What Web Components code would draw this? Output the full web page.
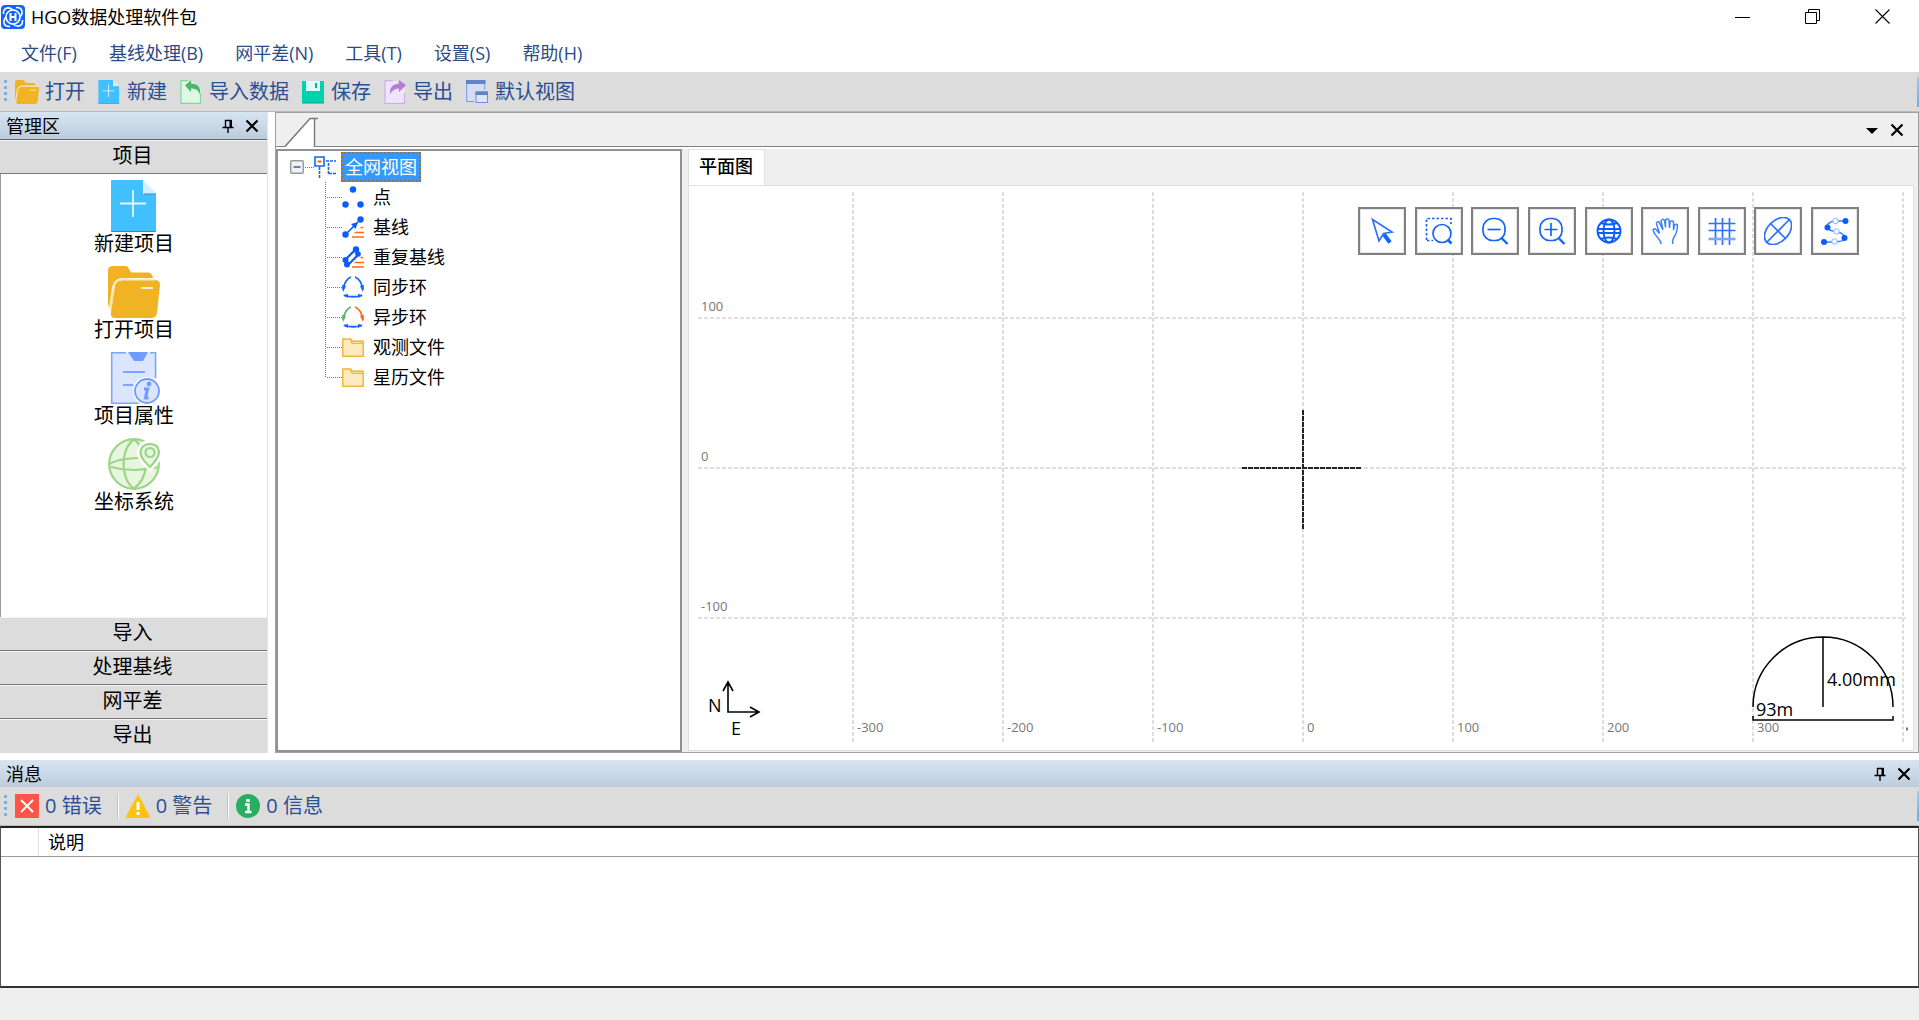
<!DOCTYPE html>
<html lang="zh-CN">
<head>
<meta charset="utf-8">
<title>HGO数据处理软件包</title>
<style>
  html, body {
    height: 100%;
    margin: 0;
  }

  body {
    font-family: "Open Sans", "Noto Sans CJK SC", sans-serif;
    font-size: 18px;
    line-height: 24px;
    color: #000;
    background: #fff;
    cursor: default;
  }
</style>
</head>
<body>

<hgo-window>
  <hgo-titlebar>HGO数据处理软件包</hgo-titlebar>
  <hgo-menubar>
    <hgo-menu>文件(F)</hgo-menu>
    <hgo-menu>基线处理(B)</hgo-menu>
    <hgo-menu>网平差(N)</hgo-menu>
    <hgo-menu>工具(T)</hgo-menu>
    <hgo-menu>设置(S)</hgo-menu>
    <hgo-menu>帮助(H)</hgo-menu>
  </hgo-menubar>
  <hgo-toolbar>
    <hgo-tool icon="open">打开</hgo-tool>
    <hgo-tool icon="new">新建</hgo-tool>
    <hgo-tool icon="import">导入数据</hgo-tool>
    <hgo-tool icon="save">保存</hgo-tool>
    <hgo-tool icon="export">导出</hgo-tool>
    <hgo-tool icon="layout">默认视图</hgo-tool>
  </hgo-toolbar>
  <hgo-manager slot="side">
    <hgo-section class="first">项目</hgo-section>
    <hgo-shortcut slot="items" icon="new">新建项目</hgo-shortcut>
    <hgo-shortcut slot="items" icon="open">打开项目</hgo-shortcut>
    <hgo-shortcut slot="items" icon="props">项目属性</hgo-shortcut>
    <hgo-shortcut slot="items" icon="coords">坐标系统</hgo-shortcut>
    <hgo-section slot="more">导入</hgo-section>
    <hgo-section slot="more">处理基线</hgo-section>
    <hgo-section slot="more">网平差</hgo-section>
    <hgo-section slot="more">导出</hgo-section>
  </hgo-manager>
  <hgo-document slot="doc">
    <hgo-tree slot="tree" label="全网视图">
      <hgo-node icon="points">点</hgo-node>
      <hgo-node icon="baseline">基线</hgo-node>
      <hgo-node icon="rebaseline">重复基线</hgo-node>
      <hgo-node icon="syncloop">同步环</hgo-node>
      <hgo-node icon="asyncloop">异步环</hgo-node>
      <hgo-node icon="folder">观测文件</hgo-node>
      <hgo-node icon="folder" last>星历文件</hgo-node>
    </hgo-tree>
    <hgo-plan label="平面图"></hgo-plan>
  </hgo-document>
  <hgo-messages slot="bottom"></hgo-messages>
</hgo-window>

<script>
  // name: [viewBox, markup]
  const ICONS = {
    logo: ['0 0 24 24', `<rect width="24" height="24" rx="4" fill="#1465f5"/>
      <g fill="none" stroke="#fff" stroke-width="1.6"><circle cx="12" cy="12" r="7"/>
      <path d="M2.500 9C2 3 7 1 12 5M21.500 15c.5 6-4.500 8-9.500 4M15 2.500c6-.5 8 4.500 4 9.500M9 21.500c-6 .5-8-4.500-4-9.500"/>
      <path d="M9.500 8v8M14.500 8v8M9.500 12h5" stroke-width="2"/></g>`],
    min: ['0 0 16 16', `<path d="M0 8.5h15" stroke="#000"/>`],
    restore: ['0 0 16 16', `<path d="M.5 3.5h11v11H.5zM3.5 3V.5h11v11H12" fill="none" stroke="#000"/>`],
    close: ['0 0 16 16', `<path d="M.5.5l14 14M14.5.5l-14 14" stroke="#000" stroke-width="1.1"/>`],
    x: ['0 0 14 14', `<path d="M1.5 1.5l11 11M12.5 1.5l-11 11" stroke="#000" stroke-width="2.2"/>`],
    pin: ['0 0 14 14', `<path d="M4 1.5h6.5M4.500 1v7M1.500 8.500h11M7 8v6" fill="none" stroke="#000" stroke-width="1.4"/><path d="M8.500 1H11v8H8.500z"/>`],
    down: ['0 0 14 14', `<path d="M1 5h12L7 11z"/>`],
    open: ['0 0 52 52', `<path d="M0 36V5q0-5 5-5h12q3 0 4 3l2 3.500h17q4 0 5 5.500H14q-6 0-7.500 6L3 44q-3-3-3-8z" fill="#f0b323"/>
      <path d="M13 14h34q5 0 5 5l-3 28q-1 5-6 5H7q-5 0-4-6L7 20q1-6 6-6z" fill="#f0b323"/>
      <path d="M2 43l3-22q2-7.500 9-7.500h33" fill="none" stroke="#fdebc0" stroke-width="2"/>
      <path d="M33 22h12" stroke="#fff1cf" stroke-width="2"/>`],
    new: ['0 0 52 52', `<path d="M3 0h32v14h13v38H3z" fill="#41c0ff"/><path d="M35 0l13 13v1H35z" fill="#d5efff"/>
      <path d="M36 14h12M3 51.500h45" stroke="#2592cc"/>
      <path d="M12 23.500h26M25 10v27" stroke="#e4f6ff" stroke-width="1.8"/>`],
    props: ['0 0 52 52', `<path d="M3 .5h45V52H3z" fill="#dbe5fe"/><path d="M18 .7H3.700v50.600H30M42 .7h5.600V26" fill="none" stroke="#7ba5ff" stroke-width="1.6"/>
      <path d="M20 0h20l-5 9h-9z" fill="#6f9cff"/><path d="M15 20h22M15 33h10" stroke="#7ba5ff" stroke-width="2"/>
      <circle cx="39" cy="39" r="14" fill="#fff"/><circle cx="39" cy="39" r="12" fill="#dbe5fe" stroke="#6f9cff" stroke-width="1.8"/>
      <circle cx="41" cy="32" r="2.4" fill="#6f9cff"/><path d="M36 37h3.500l-2 9h3" fill="none" stroke="#6f9cff" stroke-width="3.200"/>`],
    coords: ['0 0 52 52', `<g fill="#e7f6df" stroke="#9dd487" stroke-width="2.2"><circle cx="26" cy="26" r="24.800"/>
      <path fill="none" d="M26 1.500c-14 9-14 40 0 49M26 1.500q6 4 8 12M38 29q-2 14-12 21.500M2 26q6-5 28-6M3 29q22 6 48 0"/>
      <path d="M42 30q-11-10-10-16 1-9 10-9t10 9q0 6-10 16z" stroke="#fff" stroke-width="6"/>
      <path d="M42 29q-10-9-9.500-15 1-8 9.500-8t9 8q0 6-9 15z"/><circle cx="42" cy="14.500" r="4.500"/></g>`],
    import: ['0 0 24 24', `<path d="M2 1h12l8 9v13H2z" fill="#dff8e4"/><path d="M9 .7H2v22.600h19.500V13" fill="none" stroke="#7ed89b" stroke-width="1.2"/>
      <path d="M6 5.500L12 0v3.500c7 0 10 4 9 11-1.500-4-4-6-9-6V12z" fill="#4cb76a"/>`],
    save: ['0 0 24 24', `<path d="M1 1h22v22H1z" fill="#00d2ae"/><path d="M5 1h14v10H5z" fill="#e3fbf6"/><path d="M14 3h2v5h-2z" fill="#00b496"/><path d="M1 23h22" stroke="#00a88c"/>`],
    export: ['0 0 24 24', `<path d="M2 1h12l8 9v13H2z" fill="#f0e4fb"/><path d="M10 .7H2v22.600h19.500V13" fill="none" stroke="#cfaee9" stroke-width="1.2"/>
      <path d="M23 5L16 0v3.500c-7 1-9.500 4-9 11C9 10.500 11 9 16 8.500V12z" fill="#b77bdc"/>`],
    layout: ['0 0 24 24', `<path d="M1.700 1h18v20.500h-18z" fill="#d3defb" stroke="#7c98dd"/><path d="M1 0h19.500v4H1z" fill="#6482cc"/>
      <path d="M9 9.500h15V24H9z" fill="#dcdcdc"/><path d="M11 12h11.500v10.500H11z" fill="#dbe5ff" stroke="#6d8edb"/><path d="M10.500 11.500h12.500v3.500H10.500z" fill="#6482cc"/>`],
    error: ['0 0 24 24', `<path d="M0 0h24v24H0z" fill="#ff5448"/><path d="M6 6l12 12M18 6L6 18" stroke="#fff" stroke-width="2"/>`],
    warn: ['0 0 24 24', `<path d="M12 0l12 22.500q0 1.500-1.500 1.500h-21Q0 24 0 22.500z" fill="#ffc20e"/><path d="M12 8v8M12 18v3" stroke="#fff" stroke-width="3"/>`],
    info: ['0 0 24 24', `<circle cx="12" cy="12" r="12" fill="#27ae60"/><path d="M12 5v3" stroke="#fff" stroke-width="3.4"/><path d="M9 10.500h3.500V18M9 18h6.500" fill="none" stroke="#fff" stroke-width="2.4"/>`],
    expander: ['0 0 24 24', `<rect x=".7" y="5.700" width="12.600" height="12.600" rx="1" fill="#f2f2f2" stroke="#999" stroke-width="1.4"/>
      <path d="M3.500 12h7" stroke="#3f67a8" stroke-width="1.6"/><path d="M15 12.500h9" stroke="#777" stroke-dasharray="1 1"/>`],
    network: ['0 0 22 22', `<g fill="none" stroke="#1465f5" stroke-width="1.6"><path d="M1 1h9v9H1z" fill="#fff"/>
      <path d="M12 5h10M5.500 11v11M14.500 7v11M15 17.500h7" stroke-dasharray="3 1"/></g><path d="M3.500 5.500h4" stroke="#f60" stroke-width="2"/>`],
    branch: ['0 0 17 30', `<path d="M.5 0v30M2 15.500h15" stroke="#777" stroke-dasharray="1 1"/>`],
    branchend: ['0 0 17 30', `<path d="M.5 0v16M2 15.500h15" stroke="#777" stroke-dasharray="1 1"/>`],
    points: ['0 0 22 22', `<g fill="#0a5cff"><circle cx="11" cy="3.500" r="3.200"/><circle cx="3.500" cy="18.500" r="3.200"/><circle cx="18.500" cy="18.500" r="3.200"/></g>`],
    baseline: ['0 0 22 22', `<g fill="#0a5cff"><circle cx="3.500" cy="18.500" r="3.200"/><circle cx="18.500" cy="3.500" r="3.200"/><path d="M9 8l7-2-2.500 7z"/></g>
      <path d="M4 18L16 6" stroke="#0a5cff" stroke-width="1.6"/><path d="M18.500 11.500H21M12.500 16.500H22M10 21h12" stroke="#ff6a13" stroke-width="1.6"/>`],
    rebaseline: ['0 0 22 22', `<path d="M3 14L13 4M7 18L17 8" stroke="#0a5cff" stroke-width="2.200"/><g fill="#0a5cff"><circle cx="3.500" cy="14" r="3"/><circle cx="5" cy="18.500" r="3"/><circle cx="14" cy="3.500" r="3.200"/><circle cx="16" cy="8" r="2.800"/></g>
      <path d="M18.500 11.500H21M12.500 16.500H22M10 21h12" stroke="#ff6a13" stroke-width="1.6"/>`],
    syncloop: ['0 0 22 22', `<g fill="none" stroke="#1465f5" stroke-width="1.8"><path d="M9 1Q3 3 1 14M13 1q6 2 8 13M2 19.500q9 2.500 18 0"/></g>
      <path d="M0 9l4 1-3 6zM22 9l-4 1 3 6zM6 18v4l-5-3zM16 18v4l5-3z" fill="#1465f5"/>`],
    asyncloop: ['0 0 22 22', `<g fill="none" stroke-width="1.8"><path d="M9 1Q3 3 1 14" stroke="#4fb768"/><path d="M13 1q6 2 8 13" stroke="#ff6a13"/><path d="M2 19.500q9 2.500 18 0" stroke="#1465f5"/></g>
      <path d="M0 9l4 1-3 6z" fill="#4fb768"/><path d="M22 9l-4 1 3 6z" fill="#ff6a13"/><path d="M6 18v4l-5-3zM16 18v4l5-3z" fill="#1465f5"/>`],
    folder: ['0 0 22 22', `<path d="M.8 3h7.700l2 2.500h10.700v14.700H.8z" fill="#feebc0" stroke="#efb83c" stroke-width="1.5"/><path d="M8 3l2 4.500h11M11 5h10" fill="none" stroke="#efb83c" stroke-width="1.2"/>`],
    pointer: ['0 0 28 28', `<path d="M4.500 2.500L24 15l-8.500 1.500L11 24z" fill="none" stroke="#2a72ff" stroke-width="1.7"/><path d="M16 17.500l6 8" stroke="#1465f5" stroke-width="4"/>`],
    zoomwin: ['0 0 28 28', `<g fill="none" stroke="#1465f5" stroke-width="1.7"><path d="M1.500 23V1.500H26V7M2 23.500h6" stroke-dasharray="2.500 2"/><circle cx="17" cy="16.500" r="9"/></g><path d="M22.500 22.500l4 4" stroke="#1465f5" stroke-width="2.6"/>`],
    zoomout: ['0 0 28 28', `<g fill="none" stroke="#1465f5" stroke-width="1.7"><rect x="2" y="1.500" width="22" height="22" rx="9.500"/><path d="M6.500 12.500h13"/></g><path d="M20.500 21l6 6" stroke="#1465f5" stroke-width="2.4"/>`],
    zoomin: ['0 0 28 28', `<g fill="none" stroke="#1465f5" stroke-width="1.7"><rect x="2" y="1.500" width="22" height="22" rx="9.500"/><path d="M6.500 12.500h13M13 6v13"/></g><path d="M20.500 21l6 6" stroke="#1465f5" stroke-width="2.4"/>`],
    globe: ['0 0 28 28', `<g fill="none" stroke="#0a5cff" stroke-width="1.9"><circle cx="14" cy="14" r="11.500"/><ellipse cx="14" cy="14" rx="5.500" ry="11.500"/><path d="M2.500 12h23M2.500 16h23M6 6q8 3 16 0M6 22q8-3 16 0"/></g>`],
    hand: ['0 0 28 28', `<path d="M10 27q0-3-3-6-4-4-5-8 1-2.500 3.500 0l3 3.500L5.500 7q0-3 2.500-2l4 8-2-9q1.500-3 3.500-.5l1 7V3q2-2.500 3.500 0l.5 8 .5-6q2-2.500 3.500 0v8l1-5q3-2 3 1-.5 7-3 10-2 3-2 8" fill="none" stroke="#3d80ff" stroke-width="1.500"/>`],
    grid: ['0 0 28 28', `<g stroke="#2a72ff" stroke-width="1.7"><path d="M7.500 1v27M14.500 1v27M21.500 1v27M.5 6.500h27M.5 13.500h27"/><path d="M.5 22h27" stroke-width="2.6" stroke="#7aa7ff"/></g>`],
    ellipse: ['0 0 28 28', `<g fill="none" stroke="#2a72ff" stroke-width="1.7"><ellipse cx="14" cy="14" rx="16" ry="10.500" transform="rotate(-45 14 14)"/><path d="M3 25L25 3M7 7l14 14"/></g>`],
    route: ['0 0 28 28', `<path d="M24 4H13q-8 2-7 7 3 3 10 4 7 1 8 6-2 4-9 3.500L3 25.500" fill="none" stroke="#3d80ff" stroke-width="1.4"/>
      <g fill="#0a5cff"><circle cx="24.500" cy="4" r="3"/><circle cx="6.500" cy="10.500" r="3"/><circle cx="23.500" cy="21" r="3"/><circle cx="3" cy="25" r="3"/></g>
      <g fill="#fff" stroke="#8ab2ff"><circle cx="14.500" cy="4" r="2.700"/><circle cx="15.500" cy="14.500" r="2.700"/><circle cx="13.500" cy="24.500" r="2.700"/></g>`]
  };

  class Base extends HTMLElement {
    constructor() {
      super();
      this._shadow = this.attachShadow({ mode: 'open' });
    }

    connectedCallback() {
      this._shadow.innerHTML = this.render();
    }
  }

  const BUTTON = `
    button {
      font: inherit;
      color: inherit;
      background: none;
      border: 0;
      margin: 0;
      padding: 0;
    }`;

  // gradient caption bar shared by the docked panels
  const CAPTION = `
    .caption {
      display: flex;
      align-items: center;
      gap: 10px;
      box-sizing: border-box;
      height: 27px;
      flex: none;
      padding: 1px 8px 0 6px;
      background: linear-gradient(#d7e5f2, #bdccdc);
    }
    .caption h2 {
      flex: 1;
      margin: 0;
      font-size: 18px;
      font-weight: normal;
    }`;

  const PIN_CLOSE = `
    <button title="自动隐藏"><hgo-icon name="pin" w="14" h="14"></hgo-icon></button>
    <button title="关闭"><hgo-icon name="x" w="14" h="14"></hgo-icon></button>`;

  customElements.define('hgo-icon', class extends Base {
    render() {
      const [box, body] = ICONS[this.getAttribute('name')];
      const w = this.getAttribute('w') || 24;
      const h = this.getAttribute('h') || w;
      return `<style>
        :host { display: block; flex: none; }
        svg { display: block; }
      </style>
      <svg width="${w}" height="${h}" viewBox="${box}" aria-hidden="true">${body}</svg>`;
    }
  });

  customElements.define('hgo-window', class extends Base {
    render() {
      return `<style>
        :host {
          display: flex;
          flex-direction: column;
          height: 100vh;
          overflow: hidden;
        }
        main {
          flex: 1;
          min-height: 0;
          display: flex;
          gap: 7px;
          padding-bottom: 7px;
        }
        footer {
          flex: none;
          height: 32px;
          background: #efefef;
        }
      </style>
      <slot></slot>
      <main><slot name="side"></slot><slot name="doc"></slot></main>
      <slot name="bottom"></slot>
      <footer></footer>`;
    }
  });

  customElements.define('hgo-titlebar', class extends Base {
    render() {
      return `<style>
        :host {
          display: flex;
          align-items: center;
          gap: 6px;
          height: 34px;
          flex: none;
        }
        h1 {
          flex: 1;
          margin: 0;
          font-size: 18px;
          font-weight: normal;
        }
        hgo-icon.logo { margin-left: 1px; }
        nav {
          display: flex;
          gap: 54px;
          padding-right: 28px;
        }
        ${BUTTON}
      </style>
      <hgo-icon class="logo" name="logo"></hgo-icon>
      <h1><slot></slot></h1>
      <nav>
        <button title="最小化"><hgo-icon name="min" w="16"></hgo-icon></button>
        <button title="还原"><hgo-icon name="restore" w="16"></hgo-icon></button>
        <button title="关闭"><hgo-icon name="close" w="16"></hgo-icon></button>
      </nav>`;
    }
  });

  customElements.define('hgo-menubar', class extends Base {
    render() {
      return `<style>
        :host {
          display: flex;
          align-items: center;
          gap: 32px;
          height: 38px;
          flex: none;
          padding-left: 21px;
          color: #2b4a86;
        }
      </style><slot></slot>`;
    }
  });

  customElements.define('hgo-menu', class extends Base {
    render() {
      return `<style>:host { display: block; } ${BUTTON}</style><button><slot></slot></button>`;
    }
  });

  customElements.define('hgo-toolbar', class extends Base {
    render() {
      return `<style>
        :host {
          display: flex;
          align-items: center;
          gap: 12px;
          box-sizing: border-box;
          height: 40px;
          flex: none;
          color: #2b4f93;
          font-size: 20px;
          background: #dcdcdc;
          border-bottom: 1px solid #bbb;
        }
        .grip {
          width: 3px;
          height: 23px;
          margin: 0 -4px 0 4px;
          background: repeating-linear-gradient(#7fb0dc 0 3px, transparent 3px 6px);
        }
        .end {
          width: 2px;
          height: 30px;
          margin-left: auto;
          background: linear-gradient(#a8c4f8, #6aaedd);
        }
      </style>
      <div class="grip"></div><slot></slot><div class="end"></div>`;
    }
  });

  customElements.define('hgo-tool', class extends Base {
    render() {
      return `<style>
        :host { display: block; }
        ${BUTTON}
        button {
          display: flex;
          align-items: center;
          gap: 6px;
        }
      </style>
      <button><hgo-icon name="${this.getAttribute('icon')}"></hgo-icon><span><slot></slot></span></button>`;
    }
  });

  customElements.define('hgo-manager', class extends Base {
    render() {
      return `<style>
        :host {
          display: flex;
          flex-direction: column;
          box-sizing: border-box;
          width: 268px;
          flex: none;
          border-right: 1px solid #e4e4e4;
        }
        ${CAPTION}
        ${BUTTON}
        .first {
          border-top: 1px solid #666;
        }
        .items {
          flex: 1;
          display: flex;
          flex-direction: column;
          align-items: center;
          gap: 10px;
          padding-top: 6px;
          border-left: 1px solid #999;
        }
      </style>
      <div class="caption"><h2>管理区</h2>${PIN_CLOSE}</div>
      <div class="first"><slot></slot></div>
      <div class="items"><slot name="items"></slot></div>
      <div><slot name="more"></slot></div>`;
    }
  });

  customElements.define('hgo-section', class extends Base {
    render() {
      return `<style>
        :host { display: block; }
        ${BUTTON}
        button {
          display: block;
          box-sizing: border-box;
          width: 100%;
          height: 34px;
          font-size: 20px;
          padding: 0 2px 1px 0;
          background: #dcdcdc;
          border-bottom: 1px solid #777;
          box-shadow: inset 0 1px #f4f4f4;
        }
        :host(:last-child) button { border-bottom-color: #dcdcdc; }
      </style><button><slot></slot></button>`;
    }
  });

  customElements.define('hgo-shortcut', class extends Base {
    render() {
      return `<style>
        :host { display: block; }
        ${BUTTON}
        button {
          display: flex;
          flex-direction: column;
          align-items: center;
          font-size: 20px;
        }
      </style>
      <button><hgo-icon name="${this.getAttribute('icon')}" w="52"></hgo-icon><span><slot></slot></span></button>`;
    }
  });

  customElements.define('hgo-document', class extends Base {
    render() {
      return `<style>
        :host {
          flex: 1;
          min-width: 0;
          display: flex;
          flex-direction: column;
          background: #efefef;
          border: 1px solid #a0a0a0;
        }
        .tabs {
          display: flex;
          align-items: center;
          gap: 11px;
          flex: none;
          height: 34px;
          padding-right: 14px;
          border-bottom: 2px solid #fff;
          background: linear-gradient(#808080, #808080) 0 100% / 100% 1px no-repeat;
        }
        .tabs svg {
          display: block;
          align-self: flex-end;
          margin-right: auto;
        }
        .body {
          flex: 1;
          min-height: 0;
          display: flex;
          gap: 6px;
          padding-right: 4px;
        }
        ${BUTTON}
      </style>
      <div class="tabs">
        <svg width="44" height="30" viewBox="0 0 44 30">
          <path d="M9 30L34 2h4v28z" fill="#fff"/>
          <path d="M9 29.500L34 1.500h8M38.500 2v28" fill="none" stroke="#777" stroke-width="1.4"/>
        </svg>
        <button title="窗口列表"><hgo-icon name="down" w="14"></hgo-icon></button>
        <button title="关闭"><hgo-icon name="x" w="14"></hgo-icon></button>
      </div>
      <div class="body"><slot name="tree"></slot><slot></slot></div>`;
    }
  });

  customElements.define('hgo-tree', class extends Base {
    render() {
      return `<style>
        :host {
          display: block;
          box-sizing: border-box;
          width: 406px;
          flex: none;
          padding: 1px 0 0 12px;
          background: #fff;
          border: 2px solid #90929a;
        }
        .root {
          display: flex;
          align-items: center;
          height: 30px;
        }
        .root span {
          box-sizing: border-box;
          height: 30px;
          margin-left: 5px;
          padding: 1px 2px;
          color: #fff;
          background: #3399ff;
          border: 2px dotted #b56a1c;
        }
        .children { padding-left: 35px; }
      </style>
      <div class="root" role="treeitem" aria-expanded="true">
        <hgo-icon name="expander"></hgo-icon>
        <hgo-icon name="network" w="22"></hgo-icon>
        <span>${this.getAttribute('label')}</span>
      </div>
      <div class="children" role="group"><slot></slot></div>`;
    }
  });

  customElements.define('hgo-node', class extends Base {
    render() {
      return `<style>
        :host {
          display: flex;
          align-items: center;
          height: 30px;
        }
        span { margin-left: 9px; }
      </style>
      <hgo-icon name="${this.hasAttribute('last') ? 'branchend' : 'branch'}" w="17" h="30"></hgo-icon>
      <hgo-icon name="${this.getAttribute('icon')}" w="22"></hgo-icon>
      <span><slot></slot></span>`;
    }
  });

  customElements.define('hgo-plan', class extends Base {
    // 150px per 100 units, the origin in the middle of the view
    _grid() {
      let s = '';
      for (let v = -300; v <= 400; v += 100) {
        const x = v * 1.5;
        s += `<path class="line" d="M${x} -276V274"/>`;
        if (v < 400) s += `<text x="${x + 4}" y="264">${v}</text>`;
      }
      for (let v = -100; v <= 100; v += 100) {
        const y = -v * 1.5;
        s += `<path class="line" d="M-605 ${y}H603"/>`;
        s += `<text x="-602" y="${y - 7}">${v}</text>`;
      }
      // the last label is cut off by the edge of the plot
      return s + '<path d="M603 261h2" stroke="#777" stroke-width="3"/>';
    }

    _tools() {
      const tools = {
        pointer: '选择', zoomwin: '窗口缩放', zoomout: '缩小', zoomin: '放大', globe: '全图',
        hand: '平移', grid: '网格', ellipse: '误差椭圆', route: '路线'
      };
      return Object.keys(tools).map((t) =>
        `<button title="${tools[t]}"><hgo-icon name="${t}" w="28"></hgo-icon></button>`).join('');
    }

    render() {
      return `<style>
        :host {
          flex: 1;
          min-width: 0;
          display: flex;
          flex-direction: column;
        }
        .tab {
          box-sizing: border-box;
          align-self: flex-start;
          height: 36px;
          padding: 4px 11px 0 10px;
          background: #fff;
          border: 1px solid #e0e0e0;
          border-bottom: 0;
          font: inherit;
          font-weight: 500;
          color: inherit;
          line-height: 24px;
          display: flex;
        }
        .view {
          position: relative;
          flex: 1;
          min-height: 0;
          margin-bottom: 1px;
          background: #fff;
          border: 1px solid #e0e0e0;
        }
        .plot {
          position: absolute;
          inset: 0;
          width: 100%;
          height: 100%;
        }
        .line { stroke: #dedede; stroke-width: 2; stroke-dasharray: 4 2; }
        .cross { stroke: #222; stroke-width: 2; stroke-dasharray: 5 1; }
        .plot text { font-size: 13px; fill: #777; }
        .compass, .scale {
          position: absolute;
          bottom: 0;
          fill: none;
          stroke: #000;
        }
        .compass { left: 16px; stroke-width: 1.6; }
        .scale { right: 15px; stroke-width: 1.5; }
        .compass text, .scale text { fill: #000; stroke: none; font-size: 18px; }
        .tools {
          position: absolute;
          top: 21px;
          right: 54px;
          display: flex;
          justify-content: space-between;
          width: 501px;
        }
        .tools button {
          display: grid;
          place-items: center;
          box-sizing: border-box;
          width: 48px;
          height: 48px;
          padding: 0;
          background: #fff;
          border: 2px solid #808080;
          box-shadow: inset 0 0 0 1px #e6e6e6;
        }
      </style>
      <button class="tab">${this.getAttribute('label')}</button>
      <div class="view">
        <svg class="plot"><svg x="50%" y="50%" overflow="visible">
          <g transform="translate(2 0)">${this._grid()}
          <path class="cross" d="M-61 0H58M0 -58V61"/></g>
        </svg></svg>
        <svg class="compass" width="60" height="80" viewBox="0 0 60 80">
          <path d="M23 12v30h31M18 21l5-9 5 9M45 37l9 5-9 5"/>
          <text x="3" y="42">N</text><text x="26" y="65">E</text>
        </svg>
        <svg class="scale" width="150" height="120" viewBox="0 0 150 120">
          <path d="M5 77a70 70 0 0 1 140 0M75 7v70M5 86v4h140v-4"/>
          <text x="79" y="56">4.00mm</text><text x="8" y="86">93m</text>
        </svg>
        <div class="tools">${this._tools()}</div>
      </div>`;
    }
  });

  customElements.define('hgo-messages', class extends Base {
    render() {
      return `<style>
        :host {
          display: flex;
          flex-direction: column;
          flex: none;
          height: 228px;
        }
        ${CAPTION}
        ${BUTTON}
        hgo-toolbar {
          height: 39px;
        }
        i {
          width: 2px;
          height: 25px;
          margin: 0 -5px 0 3px;
          background: linear-gradient(90deg, #a9c6ee 50%, #fff 50%);
        }
        .list {
          flex: 1;
          border: 1px solid #555;
          border-top: 2px solid #222;
          border-bottom: 2px solid #333;
        }
        table {
          width: 100%;
          border-collapse: collapse;
        }
        th {
          height: 28px;
          padding: 0 0 0 9px;
          font-weight: normal;
          text-align: left;
          border-bottom: 1px solid #999;
        }
        th:first-child {
          width: 28px;
          border-right: 1px solid #ddd;
        }
      </style>
      <div class="caption"><h2>消息</h2>${PIN_CLOSE}</div>
      <hgo-toolbar>
        <hgo-tool icon="error">0 错误</hgo-tool><i></i>
        <hgo-tool icon="warn">0 警告</hgo-tool><i></i>
        <hgo-tool icon="info">0 信息</hgo-tool>
      </hgo-toolbar>
      <div class="list">
        <table>
          <thead><tr><th></th><th>说明</th></tr></thead>
          <tbody></tbody>
        </table>
      </div>`;
    }
  });
</script>
</body>
</html>
